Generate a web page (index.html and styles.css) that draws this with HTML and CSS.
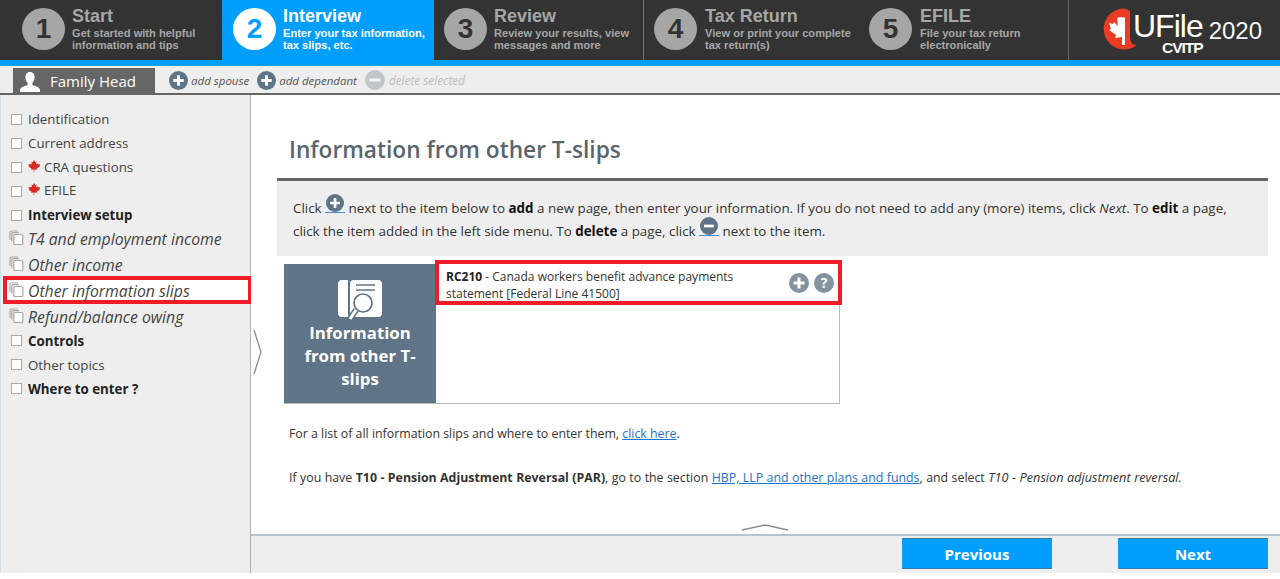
FILE: index.html
```html
<!DOCTYPE html>
<html lang="en">
<head>
<meta charset="utf-8">
<title>UFile CVITP 2020</title>
<link rel="stylesheet" href="styles.css">
</head>
<body>
<svg class="defs" width="0" height="0" aria-hidden="true">
  <defs>
    <symbol id="plus" viewBox="0 0 20 20"><circle cx="10" cy="10" r="10" fill="currentColor"/><path d="M10 4.500v11M4.500 10h11" stroke="#fff" stroke-width="3"/></symbol>
    <symbol id="minus" viewBox="0 0 20 20"><circle cx="10" cy="10" r="10" fill="currentColor"/><path d="M4.500 10h11" stroke="#fff" stroke-width="3"/></symbol>
    <symbol id="leaf" viewBox="0 0 12 12"><path d="M6 0l1.300 2.200 1.200-.6-.4 3 1.500-1.400.5 1.200 2-.3-.7 2 .6.5L8.600 8.500l.3 1.200L6.300 9.400V12h-.6V9.400l-2.600.3.300-1.200L.5 6.600l.6-.5-.7-2 2 .3.500-1.200L4 4.600l-.5-3 1.200.6z" fill="#d9281e"/></symbol>
    <symbol id="pages" viewBox="0 0 15 15"><path d="M1 10V2.500Q1 1 2.500 1H9M2.800 11.500V4Q2.800 2.700 4 2.700h6" fill="none" stroke="#a9a9a9" stroke-width="1.200"/><rect x="4.800" y="4.500" width="9" height="10" rx="1" fill="#fff" stroke="#a9a9a9" stroke-width="1.200"/></symbol>
  </defs>
</svg>

<header class="steps">
  <div class="step step-1"><span class="num">1</span><div class="step-text"><b>Start</b><small>Get started with helpful<br>information and tips</small></div></div>
  <div class="step step-2 active"><span class="num">2</span><div class="step-text"><b>Interview</b><small>Enter your tax information,<br>tax slips, etc.</small></div></div>
  <div class="step step-3"><span class="num">3</span><div class="step-text"><b>Review</b><small>Review your results, view<br>messages and more</small></div></div>
  <div class="step step-4"><span class="num">4</span><div class="step-text"><b>Tax Return</b><small>View or print your complete<br>tax return(s)</small></div></div>
  <div class="step step-5"><span class="num">5</span><div class="step-text"><b>EFILE</b><small>File your tax return<br>electronically</small></div></div>
  <div class="brand">
    <svg class="brand-mark" width="36" height="42" viewBox="0 0 36 42">
      <path d="M21 .5A20.500 20.500 0 1 0 34 37Q27 38 27 28V3Q24 1 21 .5z" fill="#ea3b25"/>
      <path d="M17 9l3 .5 2 0V37h-3V29l-7 1 1-3-7-5 2-1-2-6 4 1 1-2 4 4-1-8z" fill="#fff"/>
    </svg>
    <div class="brand-name"><span class="ufile">UFile</span><span class="cvitp">CVITP</span></div>
    <span class="year">2020</span>
  </div>
</header>
<div class="blue-strip"></div>

<div class="toolbar">
  <div class="person">
    <svg width="22" height="22" viewBox="0 0 22 22"><path d="M11 1c3.200 0 4.600 2.300 4.600 5.200 0 2.500-1 4.500-2.200 5.500v2.300c2.800 1 7 2 7.600 4.500V21H1v-2.500c.6-2.500 4.800-3.500 7.600-4.500v-2.300C7.400 10.700 6.400 8.700 6.400 6.200 6.400 3.300 7.800 1 11 1z" fill="#fff"/></svg>
    <span>Family Head</span>
  </div>
  <div class="tool"><svg class="ic ic-tool"><use href="#plus"/></svg><i>add spouse</i></div>
  <div class="tool"><svg class="ic ic-tool"><use href="#plus"/></svg><i>add dependant</i></div>
  <div class="tool disabled"><svg class="ic ic-tool"><use href="#minus"/></svg><i>delete selected</i></div>
</div>

<div class="workspace">
  <nav class="sidebar">
    <div class="row"><span class="check"></span>Identification</div>
    <div class="row"><span class="check"></span>Current address</div>
    <div class="row"><span class="check"></span><svg class="leaf"><use href="#leaf"/></svg>CRA questions</div>
    <div class="row efile"><span class="check"></span><svg class="leaf"><use href="#leaf"/></svg>EFILE</div>
    <div class="row strong"><span class="check"></span>Interview setup</div>
    <div class="row multi"><svg class="pages"><use href="#pages"/></svg>T4 and employment income</div>
    <div class="row multi"><svg class="pages"><use href="#pages"/></svg>Other income</div>
    <div class="row multi current"><svg class="pages"><use href="#pages"/></svg>Other information slips</div>
    <div class="row multi"><svg class="pages"><use href="#pages"/></svg>Refund/balance owing</div>
    <div class="row strong"><span class="check"></span>Controls</div>
    <div class="row"><span class="check"></span>Other topics</div>
    <div class="row strong"><span class="check"></span>Where to enter ?</div>
  </nav>

  <main class="content">
    <svg class="side-toggle" width="9" height="46" viewBox="0 0 9 46"><path d="M1 1l7 22-7 22" fill="none" stroke="#8d8d8d" stroke-width="1.300"/></svg>
    <div class="scroll">
      <h1>Information from other T-slips</h1>
      <div class="notice">
        <p>Click <a class="inline-ic" href="#"><svg class="ic ic-inline"><use href="#plus"/></svg></a> next to the item below to <b>add</b> a new page, then enter your information. If you do not need to add any (more) items, click <i>Next</i>. To <b>edit</b> a page,</p>
        <p>click the item added in the left side menu. To <b>delete</b> a page, click <a class="inline-ic" href="#"><svg class="ic ic-inline"><use href="#minus"/></svg></a> next to the item.</p>
      </div>
      <section class="card">
        <div class="card-side">
          <svg width="44" height="42" viewBox="0 0 44 42">
            <path d="M10 0H4Q0 0 0 4v29q0 4 4 4h6z" fill="#fff"/>
            <rect x="12" y="0" width="32" height="37" rx="4" fill="#fff"/>
            <path d="M18 5h19M18 10h19" stroke="#5f7486" stroke-width="1.400"/>
            <circle cx="25" cy="23" r="9" fill="#fff" stroke="#5f7486" stroke-width="1.700"/>
            <path d="M18 30l-6 9" stroke="#5f7486" stroke-width="6"/>
            <path d="M18 30l-6 9" stroke="#fff" stroke-width="3"/>
          </svg>
          <strong>Information from other T-slips</strong>
        </div>
        <div class="card-body">
          <div class="item">
            <p><b>RC210</b> - Canada workers benefit advance payments statement [Federal Line 41500]</p>
            <svg class="ic ic-item"><use href="#plus"/></svg>
            <span class="help">?</span>
          </div>
        </div>
      </section>
      <p class="note first">For a list of all information slips and where to enter them, <a href="#">click here</a>.</p>
      <p class="note second">If you have <b>T10 - Pension Adjustment Reversal (PAR)</b>, go to the section <a href="#">HBP, LLP and other plans and funds</a>, and select <i>T10 - Pension adjustment reversal.</i></p>
      <svg class="up" width="48" height="7" viewBox="0 0 48 7"><path d="M1 6L24 1l23 5" fill="none" stroke="#8d8d8d" stroke-width="1.300"/></svg>
    </div>
    <footer class="actions">
      <button type="button">Previous</button>
      <button type="button">Next</button>
    </footer>
  </main>
</div>
</body>
</html>
```

FILE: styles.css
```css
* { box-sizing: border-box; }
html, body { margin: 0; height: 579px; overflow: hidden; background: #fff; }
body { font-family: "Open Sans", "Liberation Sans", sans-serif; color: #333; }
.defs { position: absolute; }
.ic { display: block; color: #5f7486; }

.steps { display: flex; height: 60px; background: #333; font-family: "Liberation Sans", Arial, sans-serif; }
.step { display: flex; align-items: flex-start; color: #a6a6a6; padding-top: 8px; }
.step-1 { width: 222px; padding-left: 22px; }
.step-2 { width: 212px; padding-left: 11px; }
.step-3 { width: 210px; padding-left: 10px; border-right: 1px solid #777; }
.step-4 { width: 215px; padding-left: 10px; }
.step-5 { width: 210px; padding-left: 10px; border-right: 1px solid #666; }
.step.active { background: #009ffd; color: #fff; }
.num { flex: none; width: 43px; height: 42px; margin-right: 7px; border-radius: 50%; background: #a6a6a6; color: #333; font-size: 28px; font-weight: 700; line-height: 42px; text-align: center; }
.step-4 .num, .step-5 .num { margin-right: 8px; }
.active .num { background: #fff; color: #009ffd; }
.step-text { display: flex; flex-direction: column; margin-top: -1px; }
.step-text b { font-size: 18px; line-height: 19px; }
.step-text small { font-size: 11.100px; line-height: 12px; font-weight: 700; margin-top: 1px; white-space: nowrap; }

.brand { flex: 1; display: flex; align-items: flex-start; padding: 8px 0 0 34px; color: #fff; }
.brand-mark { flex: none; }
.brand-name { display: flex; flex-direction: column; align-items: flex-end; margin-left: -6px; }
.ufile { font-size: 32px; line-height: 28px; margin-top: 4px; letter-spacing: -1px; }
.cvitp { font-size: 15.500px; line-height: 12px; font-weight: 700; margin-top: 2px; letter-spacing: -1px; }
.year { font-size: 24px; line-height: 28px; margin: 9px 0 0 6px; color: #f4f8fb; }

.blue-strip { height: 6px; background: #009ffd; }

.toolbar { display: flex; align-items: flex-end; height: 29px; padding-left: 13px; background: #eee; border-bottom: 2px solid #666; }
.person { display: flex; align-items: center; width: 142px; height: 25px; padding-left: 6px; margin-right: 14px; background: #666; color: #fff; font-size: 15px; }
.person svg { margin-right: 9px; margin-top: 2px; }
.tool { display: flex; align-items: center; gap: 3px; height: 26px; margin-right: 8px; font-size: 11.500px; color: #555; }
.tool.disabled { opacity: .32; gap: 4px; font-size: 11.800px; }
.ic-tool { width: 19px; height: 19px; }
.disabled .ic-tool { width: 20px; height: 20px; }

.workspace { display: flex; height: 478px; }
.sidebar { flex: none; width: 251px; padding-top: 12px; background: #eee; border-right: 1px solid #a9b3bb; border-left: 1px solid #cfe0ea; font-size: 13.300px; color: #444; }
.row { display: flex; align-items: center; height: 24px; padding-left: 10px; white-space: nowrap; }
.efile { padding-bottom: 2px; }
.strong { color: #222; font-weight: 700; }
.multi { height: 25.600px; padding-left: 8px; padding-bottom: 1px; font-size: 15.800px; font-style: italic; color: #444; }
.multi + .strong { margin-top: -1px; }
.current { height: 28px; margin: -2px -1px 0 2px; padding: 2px 0 0 2px; background: #fff; border: 4px solid #ee1c25; border-right-width: 3px; }
.current + .multi { padding-bottom: 0; }
.check { flex: none; width: 11px; height: 11px; margin-right: 6px; background: #fff; border: 1.500px solid #aaa; }
.efile .check { margin-top: 2px; }
.leaf { flex: none; width: 12px; height: 12px; margin-right: 4px; margin-top: -3px; }
.pages { flex: none; width: 15px; height: 15px; margin-right: 4px; margin-top: -3px; }

.content { position: relative; flex: 1; display: flex; flex-direction: column; min-width: 0; }
.side-toggle { position: absolute; left: 2px; top: 234px; }
.scroll { flex: 1; padding: 0 12px 0 26px; min-height: 0; }
h1 { margin: 38px 0 0 12px; font-size: 22.700px; line-height: 34px; font-weight: 600; color: #5a6570; }
.notice { margin-top: 11px; height: 78px; padding: 13px 16px 0; background: #eee; border-top: 3px solid #666; font-size: 13.380px; color: #333; }
.notice p { margin: 0; height: 23px; line-height: 23px; white-space: nowrap; }
.notice b { color: #111; }
.inline-ic { display: inline-block; vertical-align: 0; border-bottom: 1px solid #3f8fd8; height: 19px; }
.ic-inline { width: 20px; height: 18px; }
.card { display: flex; width: 556px; height: 140px; margin: 8px 0 0 7px; border: 1px solid #bbb; border-width: 0 1px 1px 0; }
.card-side { flex: none; display: flex; flex-direction: column; align-items: center; width: 152px; padding-top: 16px; background: #5f7486; color: #fff; text-align: center; font-size: 16.800px; line-height: 23px; }
.card-side svg { margin-bottom: -1px; flex: none; }
.card-side strong { width: 130px; font-weight: 700; }
.card-body { flex: 1; min-width: 0; }
.item { display: flex; align-items: center; width: 407px; height: 45px; margin: -4px 0 0 -1px; padding: 0 7px; border: 4px solid #ee1c25; background: #fff; font-size: 12px; line-height: 17px; color: #333; }
.item p { margin: 4px 0 0; width: 344px; flex: none; }
.item b { color: #222; }
.ic-item { flex: none; width: 20px; height: 20px; margin-right: 5px; margin-left: -1px; color: #84939f; }
.help { flex: none; width: 20px; height: 20px; border-radius: 50%; background: #84939f; color: #fff; font-size: 14px; font-weight: 700; line-height: 20px; text-align: center; }
.note { margin: 0 0 0 12px; height: 44px; padding-top: 1px; font-size: 12.350px; line-height: 16px; color: #333; white-space: nowrap; }
.note i { font-size: 12.700px; }
.note.first { margin-top: 21px; }
.note.second { margin-top: -1px; word-spacing: .25px; }
a { color: #1f72cf; }
.up { display: block; margin: 12px 0 0 464px; }
.actions { flex: none; display: flex; justify-content: flex-end; gap: 66px; height: 39px; padding: 2px 12px 0 0; background: #eee; border-top: 2px solid #b9c3cc; }
.actions button { width: 150px; height: 31px; border: 0; border-top: 1px solid #3c7ca8; border-bottom: 1px solid #3c7ca8; background: #009ffd; color: #fff; font: 700 15px "Open Sans", sans-serif; }
```
